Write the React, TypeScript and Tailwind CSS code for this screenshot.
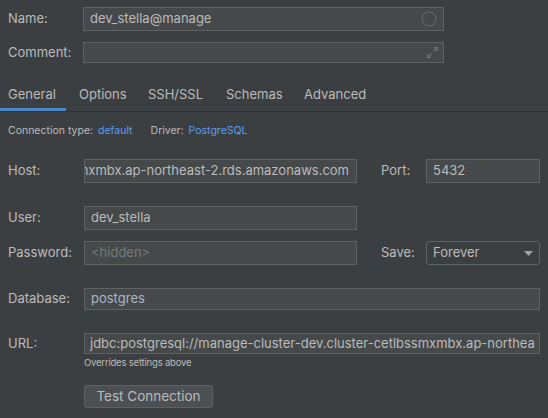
import React from "react";

const inputBase =
  "border border-[#5f6263] bg-[#45494a] flex items-center text-[13px] text-[#bbbbbb] overflow-hidden whitespace-nowrap";

function Label({ children, w = "w-[84px]" }: { children: React.ReactNode; w?: string }) {
  return <div className={`${w} pl-[8px] text-[13px] text-[#bbbbbb] shrink-0`}>{children}</div>;
}

export default function App() {
  return (
    <div
      className="w-[548px] h-[418px] bg-[#3c3f41] text-[#bbbbbb] overflow-hidden"
      style={{ fontFamily: 'Inter, "Liberation Sans", Arial, sans-serif' }}
    >
      {/* Name */}
      <div className="pt-[7px] flex items-center">
        <Label w="w-[83px]">Name:</Label>
        <div className={`${inputBase} w-[361px] h-[24px] bg-[#46494b] pl-[6px] pr-[6px] justify-between`}>
          <span>dev_stella@manage</span>
          <svg width="16" height="16" viewBox="0 0 16 16">
            <circle cx="8" cy="8" r="7" fill="none" stroke="#6b6e70" strokeWidth="1" />
          </svg>
        </div>
      </div>
      {/* Comment */}
      <div className="mt-[11px] flex items-center">
        <Label w="w-[83px]">Comment:</Label>
        <div className={`${inputBase} w-[361px] h-[21px] bg-[#3c3f41] justify-end pr-[4px]`}>
          <svg width="13" height="13" viewBox="0 0 13 13">
            <path d="M7.5 5.5 L11.5 1.5 M8 1.5 H11.5 V5" fill="none" stroke="#6b6e70" strokeWidth="1.3" />
            <path d="M5.5 7.5 L1.5 11.5 M1.5 8 V11.5 H5" fill="none" stroke="#6b6e70" strokeWidth="1.3" />
          </svg>
        </div>
      </div>
      {/* Tabs */}
      <div className="mt-[15px] flex h-[34px] border-b border-[#323232] text-[13px] whitespace-nowrap">
        <div className="w-[66px] shrink-0 pl-[8px] flex items-center border-b-[3px] border-[#4a88c7] pt-[3px] text-[#bbbbbb]">
          General
        </div>
        <div className="w-[69px] shrink-0 pl-[13px] flex items-center text-[#bbbbbb]">Options</div>
        <div className="w-[78px] shrink-0 pl-[13px] flex items-center text-[#bbbbbb]">SSH/SSL</div>
        <div className="w-[78px] shrink-0 pl-[13px] flex items-center text-[#bbbbbb]">Schemas</div>
        <div className="pl-[13px] flex items-center text-[#bbbbbb]">Advanced</div>
      </div>
      {/* Connection type */}
      <div className="mt-[12px] h-[14px] flex items-center text-[10.5px] pl-[8px] whitespace-nowrap">
        <span className="text-[#bbbbbb]">Connection type:</span>
        <span className="ml-[5px] text-[#589df6]">default</span>
        <span className="ml-[18px] text-[#bbbbbb]">Driver:</span>
        <span className="ml-[5px] text-[#589df6]">PostgreSQL</span>
      </div>
      {/* Host / Port */}
      <div className="mt-[21px] flex items-center">
        <Label>Host:</Label>
        <div className={`${inputBase} w-[273px] h-[24px] justify-end pr-[7px]`}>
          <span>mxmbx.ap-northeast-2.rds.amazonaws.com</span>
        </div>
        <div className="w-[69px] pl-[24px] text-[13px]">Port:</div>
        <div className={`${inputBase} w-[114px] h-[24px] pl-[6px]`}>5432</div>
      </div>
      {/* User */}
      <div className="mt-[23px] flex items-center">
        <Label>User:</Label>
        <div className={`${inputBase} w-[273px] h-[24px] pl-[6px]`}>dev_stella</div>
      </div>
      {/* Password / Save */}
      <div className="mt-[11px] flex items-center">
        <Label>Password:</Label>
        <div className={`${inputBase} w-[273px] h-[24px] pl-[6px]`}>
          <span className="text-[#777a7c]">&lt;hidden&gt;</span>
        </div>
        <div className="w-[69px] pl-[24px] text-[13px]">Save:</div>
        <div className="w-[114px] h-[24px] border border-[#5f6263] rounded-[3px] bg-[#3c3f41] flex items-center justify-between pl-[6px] pr-[6px] text-[13px] text-[#bbbbbb]">
          <span>Forever</span>
          <svg width="9" height="5" viewBox="0 0 9 5">
            <path d="M0 0 H9 L4.5 5 Z" fill="#a0a0a0" />
          </svg>
        </div>
      </div>
      {/* Database */}
      <div className="mt-[23px] flex items-center">
        <Label>Database:</Label>
        <div className={`${inputBase} w-[456px] h-[22px] pl-[6px]`}>
          <span className="text-[#a9b7c6]">postgres</span>
        </div>
      </div>
      {/* URL */}
      <div className="mt-[23px] flex items-center">
        <Label>URL:</Label>
        <div className={`${inputBase} w-[456px] h-[21px] pl-[5px]`}>
          <span>jdbc:postgresql://manage-cluster-dev.cluster-cetlbssmxmbx.ap-northea</span>
        </div>
      </div>
      <div className="ml-[84px] mt-[3px] h-[12px] flex items-center text-[9.5px] tracking-[-0.2px] text-[#bbbbbb]">
        Overrides settings above
      </div>
      <div className="ml-[84px] mt-[16px]">
        <div className="w-[129px] h-[23px] rounded-[3px] border border-[#5e6162] bg-[#4c5052] flex items-center justify-center text-[13.5px] text-[#bbbbbb]">
          Test Connection
        </div>
      </div>
    </div>
  );
}
